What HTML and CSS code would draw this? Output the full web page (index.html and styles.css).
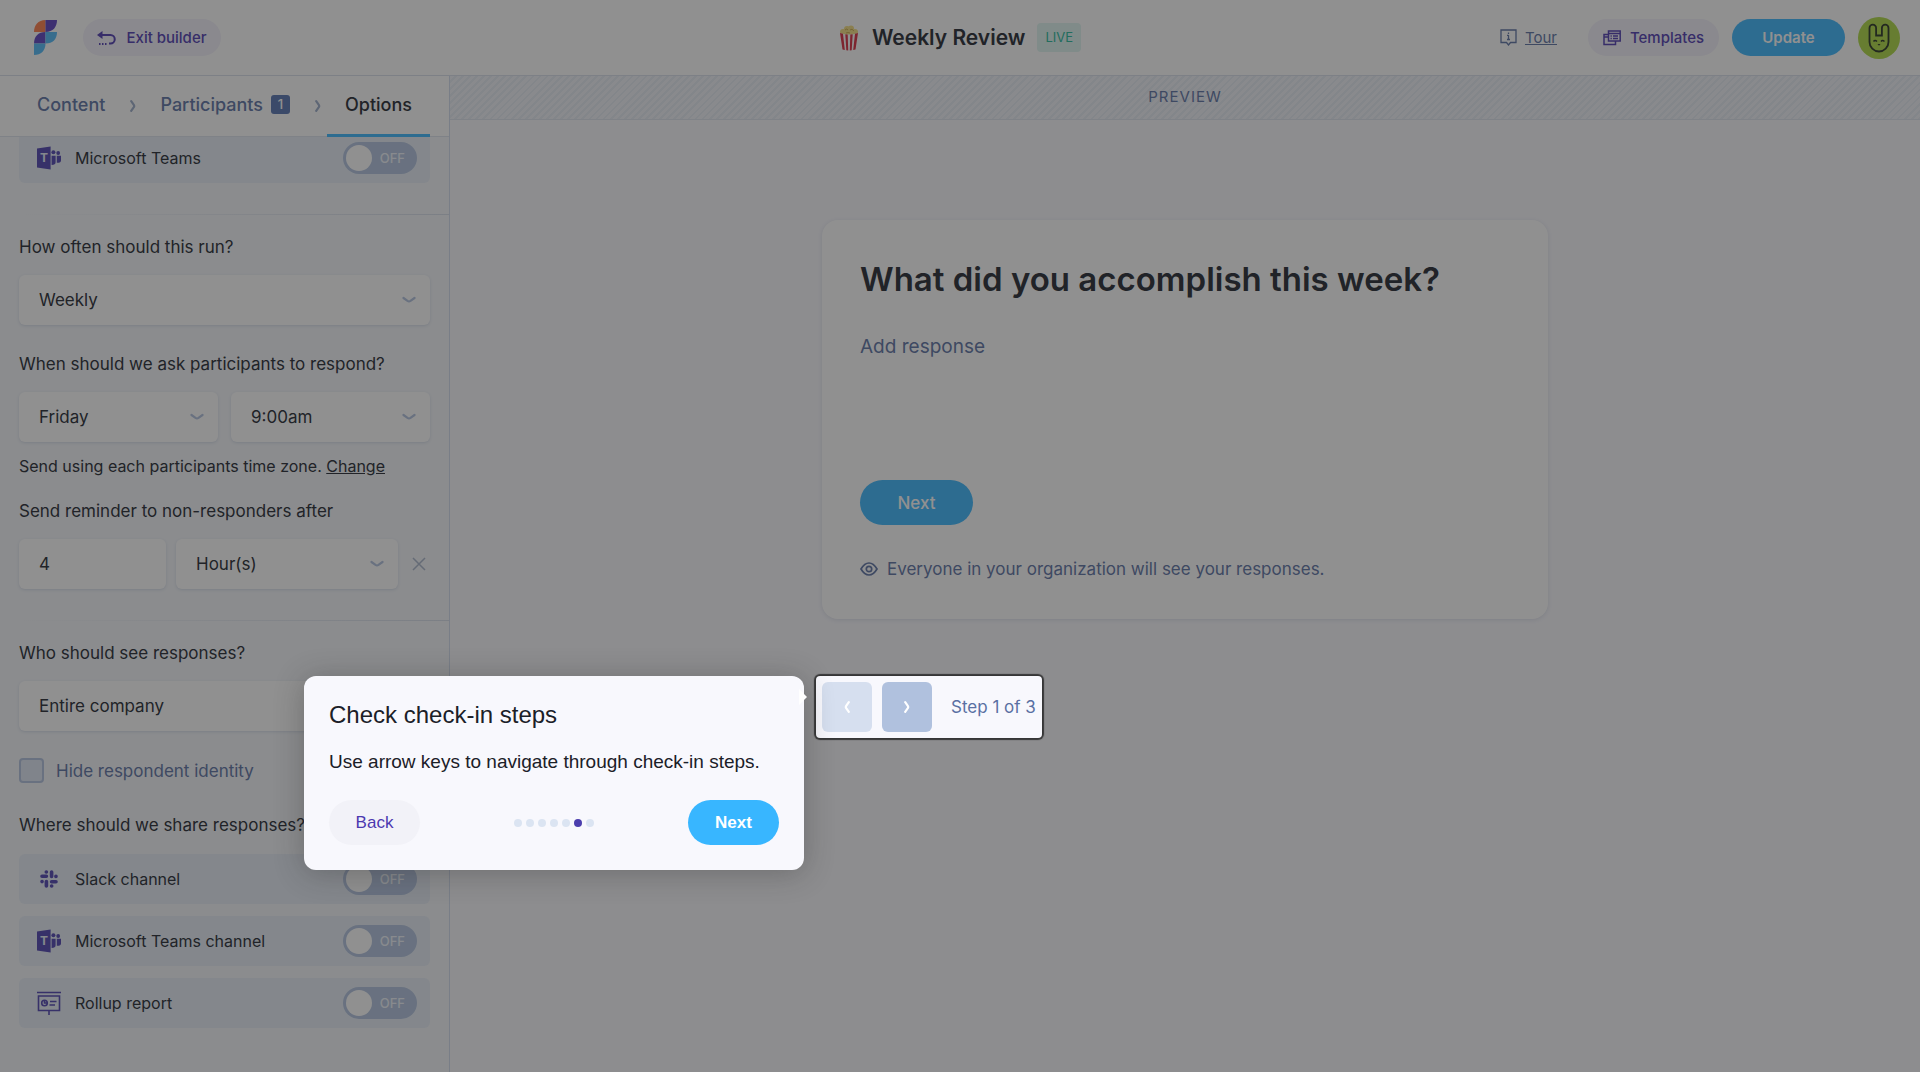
FILE: index.html
```
<!DOCTYPE html>
<html lang="en">
<head>
	<meta charset="UTF-8">
	<meta name="viewport" content="width=device-width, initial-scale=1.0">
	<title>Weekly Review</title>
	<link rel="stylesheet" href="styles.css">
</head>
<body>
	<!-- shared icons -->
	<svg class="sprite" aria-hidden="true">
		<symbol id="down" viewBox="0 0 14 8">
			<path d="M1.500 2 5.500 4.800Q7 5.800 8.500 4.800L12.500 2" fill="none" stroke="currentColor" stroke-width="2.200" stroke-linecap="round"/>
		</symbol>
		<symbol id="right" viewBox="0 0 6 12">
			<path d="M1.200 1.200 3.800 4.800Q4.600 6 3.800 7.200L1.200 10.800" fill="none" stroke="currentColor" stroke-width="2.200" stroke-linecap="round"/>
		</symbol>
	</svg>

	<header class="topbar">
		<div class="top-left">
			<svg class="logo" viewBox="0 0 23 35">
				<path fill="#ff7a47" d="M0 12C0 5 4 0 11.500 0v12z"/>
				<path fill="#5a3fc0" d="M11.500 0H23c0 7-4 12-11.500 12z"/>
				<path fill="#5a3fc0" d="M0 23.500C0 16.500 4 12 11.500 12v11.500z"/>
				<path fill="#4fb9f8" d="M11.500 12H23c0 7-4 11.500-11.500 11.500z"/>
				<path fill="#4fb9f8" d="M0 23.500h11.500C11.500 30.500 7 35 0 35z"/>
			</svg>
			<button class="btn btn-soft btn-exit" type="button">
				<svg class="ico-exit" viewBox="0 0 19 16" fill="none" stroke="currentColor" stroke-width="2">
					<path d="M3 5h10.500a4 4 0 0 1 0 8.500H12"/>
					<path d="M5.500 1v8L0 5z" fill="currentColor" stroke="none"/>
					<path d="M2 14h8" stroke-dasharray="1.500 1.500"/>
				</svg>
				Exit builder
			</button>
		</div>
		<div class="top-title">
			<svg class="popcorn" viewBox="0 0 20 26">
				<g fill="#f3dc7e">
					<circle cx="4" cy="7" r="3"/><circle cx="8" cy="4" r="3"/><circle cx="12" cy="3.500" r="3"/><circle cx="16" cy="7" r="3"/><circle cx="10" cy="7" r="4"/>
				</g>
				<path fill="#fff" d="M1 8q9 3 18 0l-2.500 16.500q-6.500 2-13 0z"/>
				<path fill="#d8293d" d="M1 8l3 .8 1.800 16.300-2.300-.6zM6.300 9.200l2.400.2.500 16-1.900-.2zM11.300 9.400l2.400-.2-1 16-1.900.2zM16 8.800l3-.8-2.500 16.500-2.300.6z"/>
				<path fill="none" stroke="#c9a94a" d="M6 5q2-2 3 0M11 5q2-2 4 1M7 8q2-1 4 0"/>
			</svg>
			<h1>Weekly Review</h1>
			<span class="live">LIVE</span>
		</div>
		<div class="top-right">
			<a class="tour" href="#tour">
				<svg class="ico-tour" viewBox="0 0 17 17" fill="none" stroke="currentColor" stroke-width="1.300">
					<path d="M1 1h15v12.500h-5.500L8.500 16l-2-2.500H1z"/>
					<path d="M8.500 6v4.500M8.500 3.500V5M7 10.500h3M7 6.300h1.500"/>
				</svg>
				<span>Tour</span>
			</a>
			<button class="btn btn-soft btn-templates" type="button">
				<svg class="ico-templates" viewBox="0 0 18 16" fill="none" stroke="currentColor" stroke-width="1.500">
					<path d="M5.500 1h11.700v10H5.500zM5.500 3.500h11.700M5.500 4.500H1v10h11.500V11.500M1 7h4"/>
					<path d="M7.500 6h1.300M10 6h5M7.500 8.500h1.300M10 8.500h5"/>
				</svg>
				Templates
			</button>
			<button class="btn btn-primary btn-update" type="button">Update</button>
			<svg class="avatar" viewBox="0 0 42 42">
				<circle cx="21" cy="21" r="21" fill="#acd840"/>
				<g fill="none" stroke="#25301f" stroke-width="1.800">
					<path d="M11.500 25V11a3.300 3.300 0 0 1 6.600 0v7.500h5.800V11a3.300 3.300 0 0 1 6.600 0v14a9.500 9.500 0 0 1-19 0z"/>
					<path d="M15.500 24.500q1.500-2 3.500 0M23 24.500q1.500-2 3.500 0" stroke-width="1.400"/>
				</g>
				<path d="M19.500 27h3L21 28.800z" fill="#25301f"/>
			</svg>
		</div>
	</header>

	<div class="workspace">
		<aside class="sidebar">
			<nav class="tabs">
				<a class="tab" href="#content">Content</a>
				<svg class="sep"><use href="#right"/></svg>
				<a class="tab" href="#participants">Participants <span class="count">1</span></a>
				<svg class="sep"><use href="#right"/></svg>
				<a class="tab active" href="#options">Options</a>
			</nav>

			<form class="options">
				<div class="channel first">
					<svg class="channel-icon" viewBox="0 0 24 24" fill="currentColor">
						<path d="M0 2.600 13.600.6v22.800L0 21.400z"/>
						<text class="teams-letter" x="7" y="16" text-anchor="middle">T</text>
						<circle cx="16.400" cy="6.300" r="2"/>
						<circle cx="21.200" cy="7" r="1.900"/>
						<path d="M14.600 9.800h4v6.400q0 2.600-4 2.800zM19.800 9.800H24v4.600q0 2.600-4.200 2.400z"/>
					</svg>
					<label for="teams-dm">Microsoft Teams</label>
					<span class="toggle"><input type="checkbox" id="teams-dm"><span>OFF</span></span>
				</div>

				<hr>

				<label class="question" for="frequency">How often should this run?</label>
				<div class="select">
					<select id="frequency"><option>Weekly</option></select>
					<svg><use href="#down"/></svg>
				</div>

				<label class="question next" for="day">When should we ask participants to respond?</label>
				<div class="row">
					<div class="select">
						<select id="day"><option>Friday</option></select>
						<svg><use href="#down"/></svg>
					</div>
					<div class="select">
						<select id="time" aria-label="Time"><option>9:00am</option></select>
						<svg><use href="#down"/></svg>
					</div>
				</div>
				<p class="hint">Send using each participants time zone. <a href="#timezone">Change</a></p>

				<label class="question reminder" for="delay">Send reminder to non-responders after</label>
				<div class="row reminder-row">
					<input class="amount" type="text" id="delay" value="4">
					<div class="select">
						<select id="unit" aria-label="Unit"><option>Hour(s)</option></select>
						<svg><use href="#down"/></svg>
					</div>
					<button class="remove" type="button" aria-label="Remove reminder">
						<svg viewBox="0 0 14 14" fill="none" stroke="currentColor" stroke-width="1.500"><path d="M1 1l12 12M13 1 1 13"/></svg>
					</button>
				</div>

				<hr>

				<label class="question" for="audience">Who should see responses?</label>
				<div class="select">
					<select id="audience"><option>Entire company</option></select>
					<svg><use href="#down"/></svg>
				</div>
				<div class="hide-identity">
					<input type="checkbox" id="anonymous">
					<label for="anonymous">Hide respondent identity</label>
				</div>

				<p class="question share">Where should we share responses?</p>
				<div class="channels">
					<div class="channel">
						<svg class="channel-icon" viewBox="0 0 24 24" fill="none" stroke="currentColor" stroke-width="3.600" stroke-linecap="round">
							<path d="M9.400 9.200H5M9.400 5h-.1M14.600 5v4.400M19 9.400h-.1M14.600 14.800H19M14.600 19h.1M9.400 14.600V19M5 14.600h.1"/>
						</svg>
						<label for="slack-channel">Slack channel</label>
						<span class="toggle"><input type="checkbox" id="slack-channel"><span>OFF</span></span>
					</div>
					<div class="channel">
						<svg class="channel-icon" viewBox="0 0 24 24" fill="currentColor">
							<path d="M0 2.600 13.600.6v22.800L0 21.400z"/>
							<text class="teams-letter" x="7" y="16" text-anchor="middle">T</text>
							<circle cx="16.400" cy="6.300" r="2"/>
							<circle cx="21.200" cy="7" r="1.900"/>
							<path d="M14.600 9.800h4v6.400q0 2.600-4 2.800zM19.800 9.800H24v4.600q0 2.600-4.200 2.400z"/>
						</svg>
						<label for="teams-channel">Microsoft Teams channel</label>
						<span class="toggle"><input type="checkbox" id="teams-channel"><span>OFF</span></span>
					</div>
					<div class="channel">
						<svg class="channel-icon" viewBox="0 0 24 24" fill="none" stroke="currentColor" stroke-width="1.600">
							<path d="M0 1.500h24M1.500 5h21v14.500h-21zM12 19.500V24"/>
							<circle cx="7.500" cy="12" r="2.800"/>
							<path d="M7.500 9v3h3M13 10.500h6.500M12.500 14h5.500"/>
						</svg>
						<label for="rollup">Rollup report</label>
						<span class="toggle"><input type="checkbox" id="rollup"><span>OFF</span></span>
					</div>
				</div>
			</form>
		</aside>

		<main class="preview">
			<div class="preview-bar">PREVIEW</div>
			<div class="stage">
				<section class="card">
					<h2>What did you accomplish this week?</h2>
					<textarea class="response" placeholder="Add response" aria-label="Response"></textarea>
					<button class="btn btn-primary btn-next" type="button">Next</button>
					<p class="visibility">
						<svg viewBox="0 0 18 14" fill="none" stroke="currentColor" stroke-width="1.700">
							<path d="M1 7q3.500-6 8-6t8 6q-3.500 6-8 6T1 7z"/>
							<circle cx="9" cy="7" r="2.700"/>
						</svg>
						Everyone in your organization will see your responses.
					</p>
				</section>

				<!-- the highlighted step dims everything around it -->
				<div class="stepper">
					<button class="arrow" type="button" aria-label="Previous step" disabled><svg class="flip"><use href="#right"/></svg></button>
					<button class="arrow" type="button" aria-label="Next step"><svg><use href="#right"/></svg></button>
					<span class="step-text">Step 1 of 3</span>

					<div class="tooltip" role="dialog" aria-labelledby="tooltip-title">
						<h3 id="tooltip-title">Check check-in steps</h3>
						<p>Use arrow keys to navigate through check-in steps.</p>
						<div class="tooltip-actions">
							<button class="btn tip-back" type="button">Back</button>
							<ul class="dots">
								<li></li><li></li><li></li><li></li><li></li><li class="on"></li><li></li>
							</ul>
							<button class="btn btn-primary tip-next" type="button">Next</button>
						</div>
					</div>
				</div>
			</div>
		</main>
	</div>
</body>
</html>
```

FILE: styles.css
```
* {
	box-sizing: border-box;
}
body {
	margin: 0;
	min-height: 100vh;
	display: flex;
	flex-direction: column;
	font-family: Inter, "Liberation Sans", sans-serif;
	font-size: 17px;
	line-height: 24px;
	color: #20252e;
	background-color: #f8f8fd;
}
h1, h2, h3, p, ul {
	margin: 0;
	padding: 0;
}
button, input, select, textarea {
	font: inherit;
	color: inherit;
	border: 0;
	margin: 0;
}
.sprite {
	position: absolute;
	width: 0;
	height: 0;
}

/* top bar */
.topbar {
	display: grid;
	grid-template-columns: 1fr auto 1fr;
	align-items: center;
	height: 76px;
	padding: 0 20px;
	background-color: #fff;
	border-bottom: 1px solid #d9dfea;
}
.top-left, .top-title, .top-right {
	display: flex;
	align-items: center;
}
.top-right {
	justify-content: flex-end;
}
.logo {
	width: 23px;
	height: 35px;
	margin: 0 26px 0 14px;
}
.btn {
	display: flex;
	align-items: center;
	justify-content: center;
	height: 37px;
	padding: 0;
	border-radius: 23px;
	font-size: 15px;
	font-weight: 500;
}
.btn-soft {
	background-color: #f2f0fa;
	color: #4c38b0;
}
.btn-primary {
	background-color: #38b6ff;
	color: #fff;
}
.btn-exit {
	width: 138px;
	gap: 10px;
}
.ico-exit {
	width: 19px;
	height: 16px;
}
.popcorn {
	width: 20px;
	height: 26px;
	margin-right: 13px;
}
.top-title h1 {
	font-size: 21px;
	font-weight: 600;
}
.live {
	margin-left: 12px;
	padding: 0 8px;
	line-height: 29px;
	font-size: 13px;
	border-radius: 4px;
	background-color: #def4f0;
	color: #22b89a;
}
.tour {
	display: flex;
	align-items: center;
	gap: 8px;
	margin-right: 31px;
	font-size: 15px;
	color: #5a70a3;
}
.ico-tour {
	width: 17px;
	height: 17px;
}
.btn-templates {
	width: 131px;
	gap: 9px;
	margin-right: 13px;
}
.ico-templates {
	width: 18px;
	height: 16px;
}
.btn-update {
	width: 113px;
	margin-right: 13px;
	font-weight: 600;
}
.avatar {
	width: 42px;
	height: 42px;
}

.workspace {
	flex: 1;
	display: flex;
}

/* sidebar */
.sidebar {
	width: 450px;
	flex-shrink: 0;
	border-right: 1px solid #d0dbec;
	background-color: #f4f6fa;
}
.tabs {
	display: flex;
	align-items: center;
	justify-content: space-between;
	height: 61px;
	padding: 0 19px;
	background-color: #fff;
	border-bottom: 1px solid #dde3ec;
}
.tab {
	display: flex;
	align-items: center;
	gap: 8px;
	height: 61px;
	padding: 0 18px;
	border-bottom: 3px solid transparent;
	font-size: 18px;
	font-weight: 500;
	color: #5a70a3;
	text-decoration: none;
}
.tab.active {
	color: #20252e;
	border-color: #38b6ff;
}
.count {
	width: 19px;
	border-radius: 3px;
	background-color: #5472b0;
	color: #fff;
	font-size: 13px;
	line-height: 19px;
	text-align: center;
}
.sep {
	width: 6px;
	height: 12px;
	color: #9aabc8;
}
.options {
	padding: 0 19px 43px;
	overflow: hidden;
}
.options hr {
	height: 1px;
	margin: 31px -19px 20px;
	border: 0;
	background: linear-gradient(to right, #f4f6fa 5%, #d6dde9);
}
.question {
	display: block;
	margin-bottom: 16px;
}
.question.next {
	margin-top: 27px;
}
.question.reminder {
	margin-top: 21px;
}
.question.share {
	margin: 30px 0 17px;
}
.select {
	position: relative;
	flex: 1;
}
.select svg {
	position: absolute;
	top: 21px;
	right: 14px;
	width: 14px;
	height: 8px;
	color: #b0c1de;
	pointer-events: none;
}
.select select, .amount {
	display: block;
	width: 100%;
	height: 50px;
	padding: 0 20px;
	border-radius: 6px;
	background-color: #fff;
	box-shadow: 0 1px 3px #d3dbe8;
	appearance: none;
}
.row {
	display: flex;
	gap: 13px;
}
.reminder-row {
	gap: 10px;
}
.amount {
	width: 147px;
}
.remove {
	width: 22px;
	padding: 0;
	background: none;
	color: #a9b5ca;
}
.remove svg {
	display: block;
	width: 14px;
	margin: 0 auto;
}
.hint {
	margin-top: 12px;
	font-size: 16px;
}
.hint a {
	color: inherit;
}
.hide-identity {
	display: flex;
	align-items: center;
	gap: 12px;
	margin-top: 27px;
	color: #5a70a3;
}
.hide-identity input {
	width: 25px;
	height: 25px;
	border: 2px solid #b0c1de;
	border-radius: 4px;
	background-color: #dfe7f5;
	appearance: none;
}
.channels {
	display: grid;
	gap: 12px;
}
.channel {
	display: flex;
	align-items: center;
	height: 50px;
	padding: 0 13px 0 18px;
	border-radius: 6px;
	background-color: #e6edf7;
	font-size: 16px;
}
/* scrolled slightly under the tabs */
.channel.first {
	margin-top: -4px;
}
.channel-icon {
	width: 24px;
	height: 24px;
	margin-right: 14px;
	color: #4c40b0;
}
.teams-letter {
	font-size: 12px;
	font-weight: 700;
	fill: #e6edf7;
}
.channel label {
	flex: 1;
}
.toggle {
	position: relative;
	height: 32px;
}
.toggle input {
	display: block;
	width: 74px;
	height: 32px;
	padding: 3px;
	border-radius: 16px;
	background-color: #b0c1de;
	appearance: none;
}
.toggle input::before {
	content: "";
	display: block;
	width: 26px;
	height: 26px;
	border-radius: 50%;
	background-color: #fff;
}
.toggle span {
	position: absolute;
	top: 0;
	right: 12px;
	line-height: 32px;
	font-size: 13px;
	font-weight: 500;
	color: #eef3fa;
	pointer-events: none;
}

/* preview */
.preview {
	flex: 1;
}
.preview-bar {
	height: 44px;
	line-height: 42px;
	font-size: 15px;
	letter-spacing: 1px;
	text-align: center;
	color: #5a70a3;
	background: repeating-linear-gradient(135deg, #f0f2f8 0 3px, #e4eaf3 3px 5px);
	border-bottom: 1px solid #dde2ec;
}
.stage {
	width: 726px;
	margin: 100px auto 0;
}
.card {
	height: 399px;
	padding: 38px;
	border-radius: 16px;
	background-color: #fff;
	box-shadow: 0 1px 4px #dcdfea;
}
.card h2 {
	font-size: 33px;
	line-height: 42px;
	font-weight: 600;
}
.response {
	display: block;
	width: 100%;
	height: 120px;
	margin: 34px 0 26px;
	padding: 0;
	font-size: 19px;
	line-height: 26px;
	resize: none;
}
.response::placeholder {
	color: #5a70a3;
}
.btn-next {
	width: 113px;
	height: 45px;
	font-size: 17px;
}
.visibility {
	display: flex;
	align-items: center;
	gap: 9px;
	margin-top: 32px;
	color: #5a70a3;
}
.visibility svg {
	width: 18px;
	height: 14px;
}

/* step pager, spotlighted by the tour */
.stepper {
	position: relative;
	z-index: 10;
	display: flex;
	align-items: center;
	gap: 10px;
	width: max-content;
	height: 62px;
	margin: 57px 0 0 -6px;
	padding: 6px;
	border-radius: 4px;
	background-color: #f8f8fd;
	box-shadow: 0 0 1px 2px rgba(33, 33, 33, 0.8), 0 0 0 5000px rgba(33, 33, 33, 0.5);
}
.arrow {
	width: 50px;
	height: 50px;
	padding: 0;
	border-radius: 6px;
	background-color: #b0c1de;
	color: #fff;
}
.arrow:disabled {
	background-color: #d6dfef;
}
.arrow svg {
	display: block;
	width: 6px;
	height: 12px;
	margin: 0 auto;
}
.arrow .flip {
	transform: scaleX(-1);
}
.step-text {
	margin-left: 9px;
	color: #5a70a3;
}
.tooltip {
	position: absolute;
	top: 0;
	right: calc(100% + 12px);
	width: 500px;
	padding: 25px;
	border-radius: 12px;
	background-color: #f8f8fd;
	box-shadow: 0 3px 30px rgba(33, 33, 33, 0.3);
	font-family: "Liberation Sans", Arial, sans-serif;
	color: #1b2028;
}
.tooltip::after {
	content: "";
	position: absolute;
	top: 13px;
	right: -3px;
	border: 8px solid transparent;
	border-left-color: #fff;
	border-right-width: 0;
}
.tooltip h3 {
	font-size: 24px;
	line-height: 28px;
	font-weight: 400;
}
.tooltip p {
	margin: 21px 0 26px;
	font-size: 19px;
}
.tooltip-actions {
	display: flex;
	align-items: center;
	justify-content: space-between;
}
.tip-back, .tip-next {
	width: 91px;
	height: 45px;
	font-size: 17px;
}
.tip-back {
	background-color: #f2f2f8;
	color: #4c38b0;
}
.tip-next {
	font-weight: 700;
}
.dots {
	display: flex;
	gap: 4px;
	list-style: none;
}
.dots li {
	width: 8px;
	height: 8px;
	border-radius: 50%;
	background-color: #dbe4f2;
}
.dots .on {
	background-color: #4c3fae;
}
```
